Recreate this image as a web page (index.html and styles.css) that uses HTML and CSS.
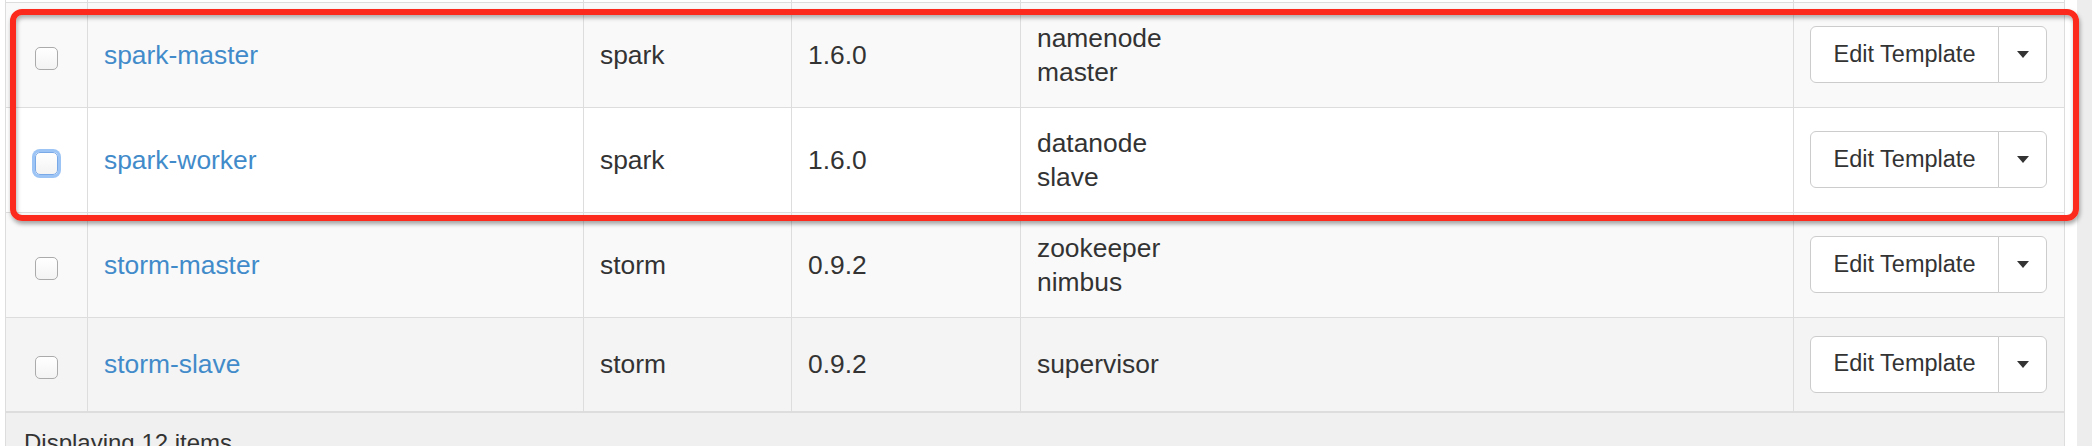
FILE: index.html
```html
<!DOCTYPE html>
<html>
<head>
<meta charset="utf-8">
<link rel="stylesheet" href="styles.css">
</head>
<body>
<div class="page">
  <div class="main">
    <table class="grid">
      <colgroup>
        <col class="c-check">
        <col class="c-name">
        <col class="c-comp">
        <col class="c-ver">
        <col class="c-roles">
        <col class="c-act">
      </colgroup>
      <tbody>
        <tr class="prev"><td></td><td></td><td></td><td></td><td></td><td></td></tr>
        <tr class="striped">
          <td class="check"><input type="checkbox" class="cb"></td>
          <td><a class="link" href="#">spark-master</a></td>
          <td>spark</td>
          <td>1.6.0</td>
          <td>namenode<br>master</td>
          <td><div class="btn-group"><button class="btn btn-main">Edit Template</button><button class="btn btn-caret"><span class="caret"></span></button></div></td>
        </tr>
        <tr class="plain">
          <td class="check"><input type="checkbox" class="cb cb-focus"></td>
          <td><a class="link" href="#">spark-worker</a></td>
          <td>spark</td>
          <td>1.6.0</td>
          <td>datanode<br>slave</td>
          <td><div class="btn-group"><button class="btn btn-main">Edit Template</button><button class="btn btn-caret"><span class="caret"></span></button></div></td>
        </tr>
        <tr class="striped">
          <td class="check"><input type="checkbox" class="cb"></td>
          <td><a class="link" href="#">storm-master</a></td>
          <td>storm</td>
          <td>0.9.2</td>
          <td>zookeeper<br>nimbus</td>
          <td><div class="btn-group"><button class="btn btn-main">Edit Template</button><button class="btn btn-caret"><span class="caret"></span></button></div></td>
        </tr>
        <tr class="hover last">
          <td class="check"><input type="checkbox" class="cb"></td>
          <td><a class="link" href="#">storm-slave</a></td>
          <td>storm</td>
          <td>0.9.2</td>
          <td>supervisor</td>
          <td><div class="btn-group"><button class="btn btn-main">Edit Template</button><button class="btn btn-caret"><span class="caret"></span></button></div></td>
        </tr>
      </tbody>
    </table>
    <div class="footer">Displaying 12 items</div>
  </div>
  <div class="track"></div>
  <div class="highlight"></div>
</div>
</body>
</html>
```
FILE: styles.css
```css
* { box-sizing: border-box; }
html, body { margin: 0; padding: 0; background: #fff; }
body {
  font-family: "Liberation Sans", Arial, Helvetica, sans-serif;
  color: #333;
  width: 2092px;
  height: 446px;
  overflow: hidden;
}
.page {
  position: relative;
  display: flex;
  height: 446px;
}
.main {
  flex: 1;
  padding-left: 5px;
  padding-right: 12px;
}
.track {
  width: 15px;
  background: #ededed;
}
.grid {
  width: 100%;
  border-collapse: collapse;
  table-layout: fixed;
  border-top: hidden;
  font-size: 26.4px;
  line-height: 34px;
}
.c-check { width: 82px; }
.c-name { width: 496px; }
.c-comp { width: 208px; }
.c-ver { width: 229px; }
.c-roles { width: 773px; }
.grid td {
  border: 1px solid #dddddd;
  padding: 18px 16px;
  vertical-align: middle;
  white-space: nowrap;
}
.grid tr.prev td {
  height: 2px;
  padding: 0;
  line-height: 0;
  font-size: 0;
}
.grid tr.prev { background: #fff; }
.grid tr.striped { background: #f9f9f9; }
.grid tr.plain { background: #fff; }
.grid tr.hover { background: #f4f4f4; }
.grid tr.last td { border-bottom-width: 2px; }
.grid td.check {
  text-align: center;
  padding-left: 0;
  padding-right: 0;
}
.link {
  color: #428bca;
  text-decoration: none;
}
.cb {
  -webkit-appearance: none;
  appearance: none;
  display: inline-block;
  width: 23px;
  height: 23px;
  margin: 3px 0 0 0;
  vertical-align: middle;
  border: 1px solid #ababab;
  border-radius: 5px;
  background: linear-gradient(#ffffff, #f3f3f3);
}
.cb-focus {
  border-color: #7aa9e8;
  box-shadow: 0 0 0 3px #9cc4f5;
}
.btn-group {
  display: flex;
}
.btn {
  font-family: "Liberation Sans", Arial, Helvetica, sans-serif;
  font-size: 23.5px;
  color: #333;
  height: 57px;
  background: #fff;
  border: 1px solid #cccccc;
  margin: 0;
  padding: 0;
  line-height: 1;
}
.btn-main {
  width: 189px;
  border-radius: 6px 0 0 6px;
}
.btn-caret {
  width: 49px;
  margin-left: -1px;
  border-radius: 0 6px 6px 0;
  display: flex;
  align-items: center;
  justify-content: center;
}
.caret {
  display: block;
  width: 0;
  height: 0;
  border-top: 7px solid #333;
  border-left: 6.5px solid transparent;
  border-right: 6.5px solid transparent;
}
.footer {
  background: #f0f0f0;
  border-left: 1px solid #dddddd;
  border-right: 1px solid #dddddd;
  padding: 13px 18px;
  font-size: 24px;
  line-height: 34px;
  color: #333;
}
.highlight {
  position: absolute;
  left: 10px;
  top: 9px;
  width: 2069px;
  height: 212px;
  border: 6px solid #fc2a1c;
  border-radius: 12px;
  box-shadow: 1px 3px 4px rgba(0, 0, 0, 0.35), inset 1px 3px 4px rgba(0, 0, 0, 0.3);
  pointer-events: none;
}
```
